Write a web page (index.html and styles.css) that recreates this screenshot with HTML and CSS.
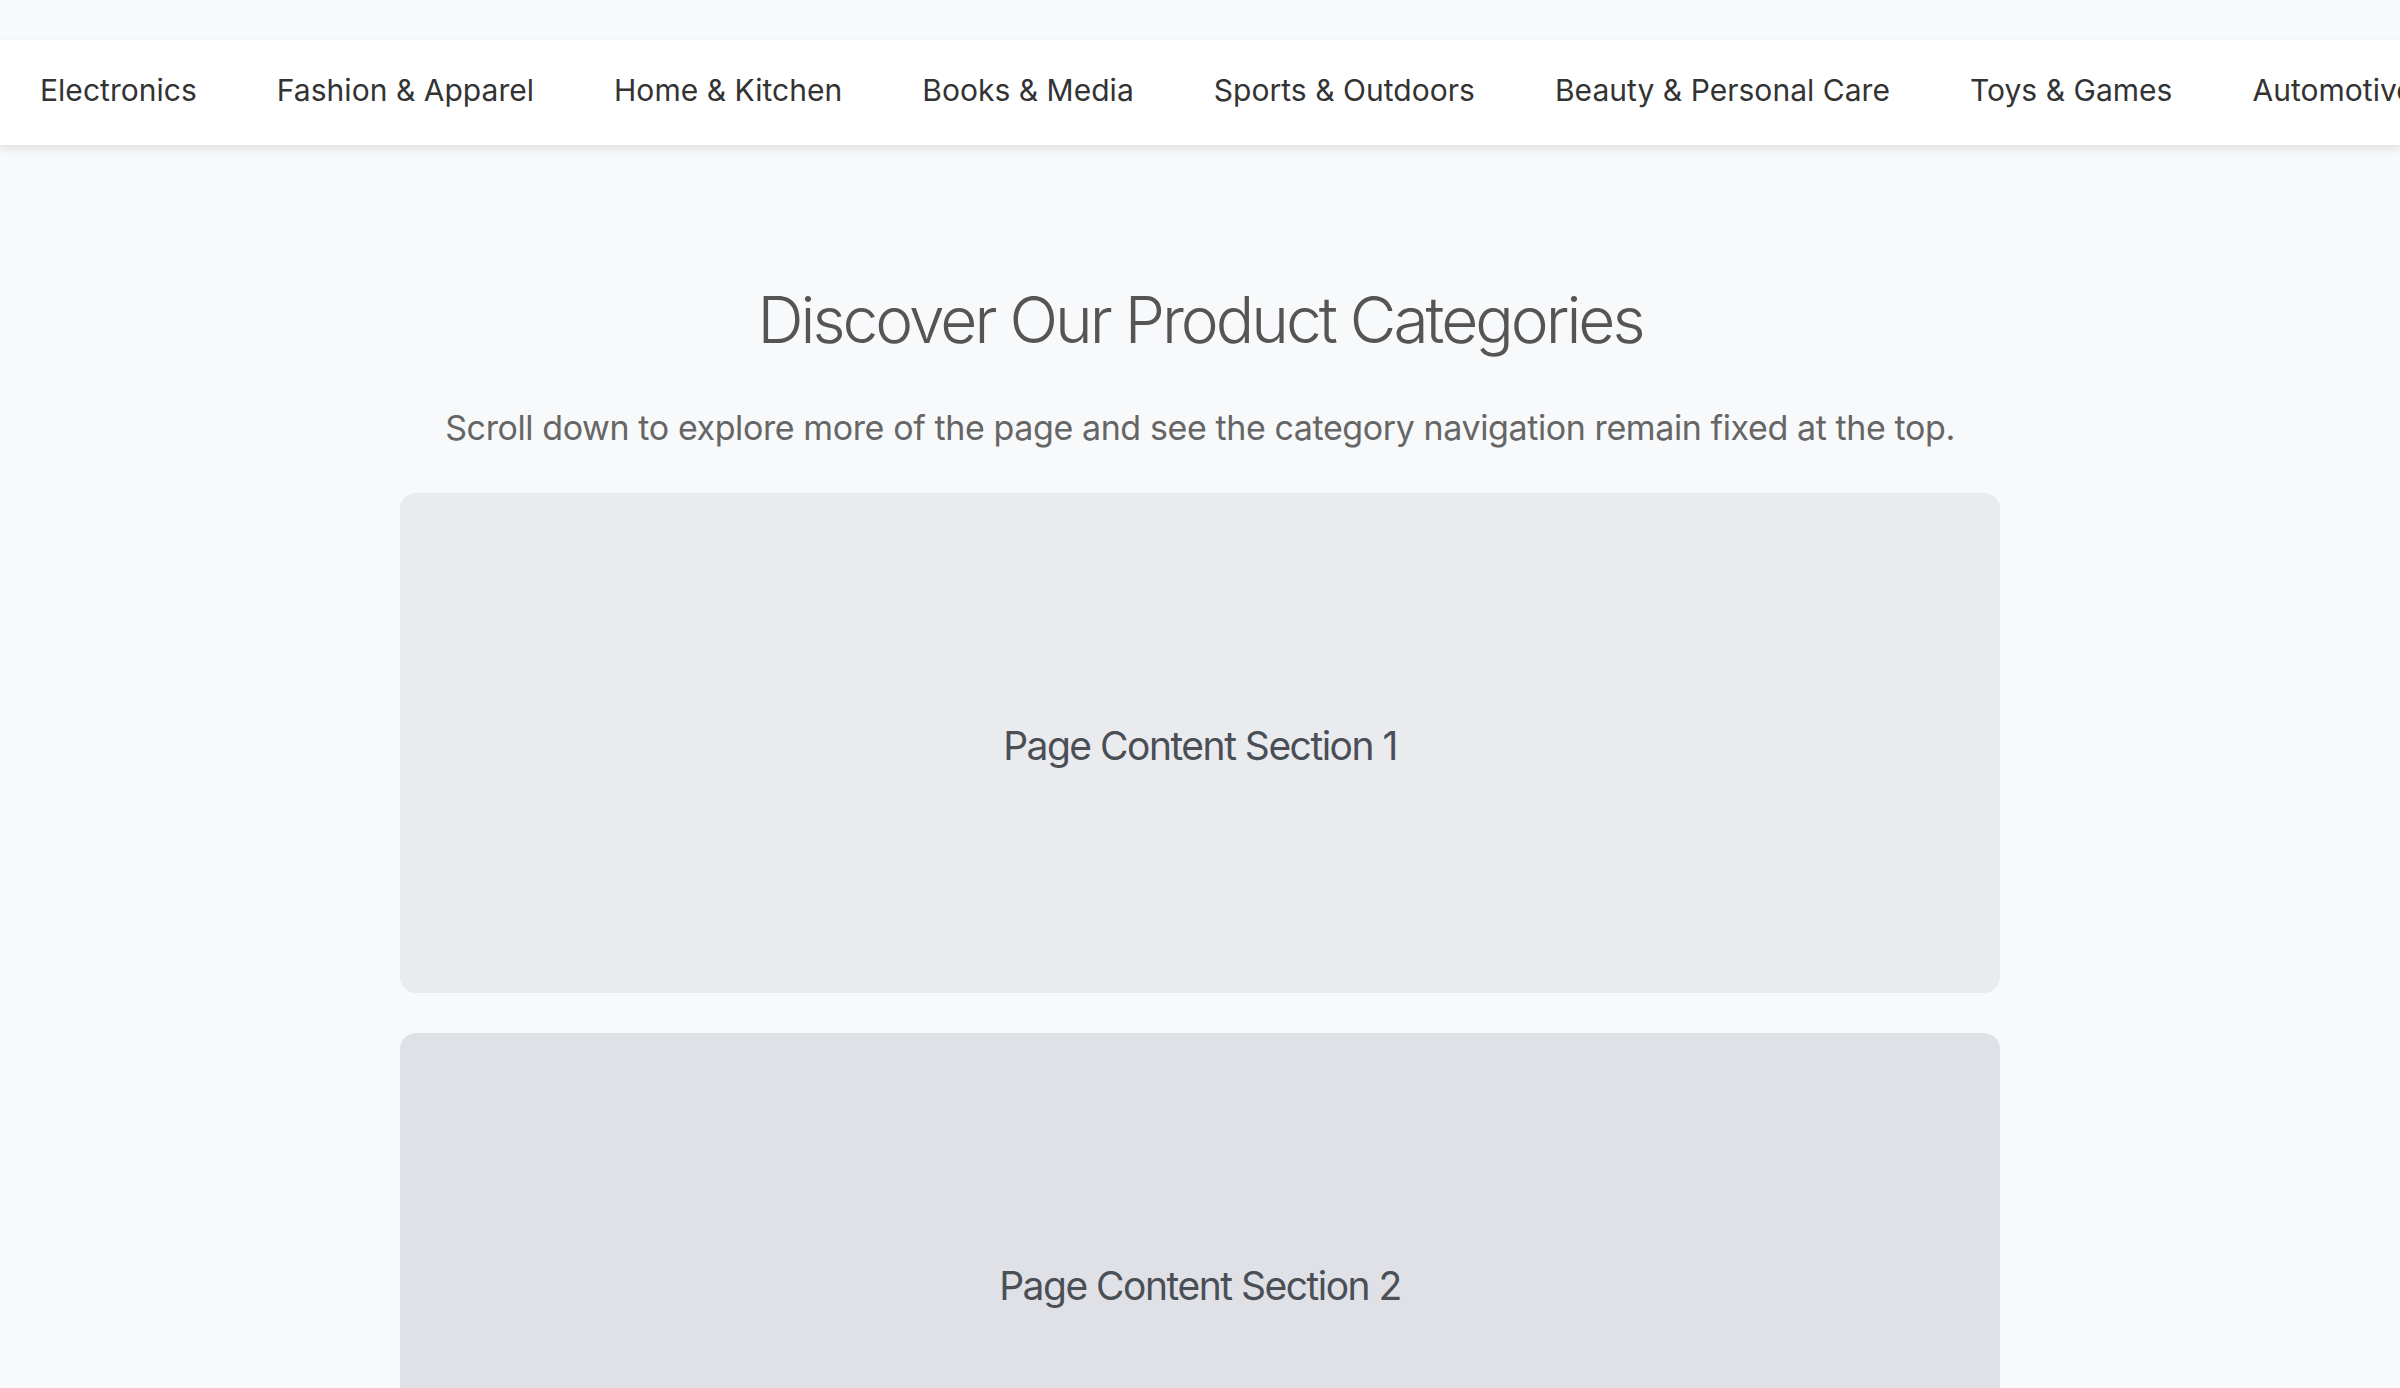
FILE: index.html
```html
<!DOCTYPE html>
<html lang="en">
<head>
<meta charset="utf-8">
<title>Product Categories</title>
<link rel="stylesheet" href="styles.css">
</head>
<body>
<div class="page">
  <nav class="category-nav">
    <a class="nav-item" href="#">Electronics</a>
    <a class="nav-item" href="#">Fashion &amp; Apparel</a>
    <a class="nav-item" href="#">Home &amp; Kitchen</a>
    <a class="nav-item" href="#">Books &amp; Media</a>
    <a class="nav-item" href="#">Sports &amp; Outdoors</a>
    <a class="nav-item" href="#">Beauty &amp; Personal Care</a>
    <a class="nav-item" href="#">Toys &amp; Games</a>
    <a class="nav-item" href="#">Automotive</a>
  </nav>
  <main class="content">
    <h1 class="title">Discover Our Product Categories</h1>
    <p class="subtitle">Scroll down to explore more of the page and see the category navigation remain fixed at the top.</p>
    <section class="section section-a">Page Content Section 1</section>
    <section class="section section-b">Page Content Section 2</section>
    <section class="section section-a">Page Content Section 3</section>
  </main>
</div>
</body>
</html>
```

FILE: styles.css
```css
html, body {
  margin: 0;
  padding: 0;
  background: #f8f9fa;
  font-family: Inter, "Noto Sans", "Liberation Sans", sans-serif;
}

.page {
  padding-top: 40px;
}

.category-nav {
  display: flex;
  align-items: center;
  box-sizing: border-box;
  height: 105px;
  padding-bottom: 6px;
  background: #ffffff;
  box-shadow: 0 4px 8px rgba(0, 0, 0, 0.1);
  overflow: hidden;
  white-space: nowrap;
}

.nav-item {
  flex: none;
  padding: 0 40px;
  font-size: 30px;
  letter-spacing: 0.03px;
  color: #333333;
  text-decoration: none;
}

.content {
  max-width: 1600px;
  margin: 0 auto;
  padding-top: 136px;
}

.title {
  margin: 0;
  font-size: 64px;
  line-height: 77px;
  font-weight: 300;
  letter-spacing: -3px;
  color: #555555;
  text-align: center;
}

.subtitle {
  margin: 44px 0 40px;
  font-size: 34px;
  line-height: 51px;
  letter-spacing: -0.4px;
  color: #666666;
  text-align: center;
}

.section {
  display: flex;
  align-items: center;
  justify-content: center;
  height: 500px;
  margin-bottom: 40px;
  border-radius: 16px;
  font-size: 39px;
  letter-spacing: -1.5px;
  padding-top: 4px;
  box-sizing: border-box;
  color: #4a4f56;
}

.section-a {
  background: #eaebef;
}

.section-b {
  background: #dfe1e6;
}
```
